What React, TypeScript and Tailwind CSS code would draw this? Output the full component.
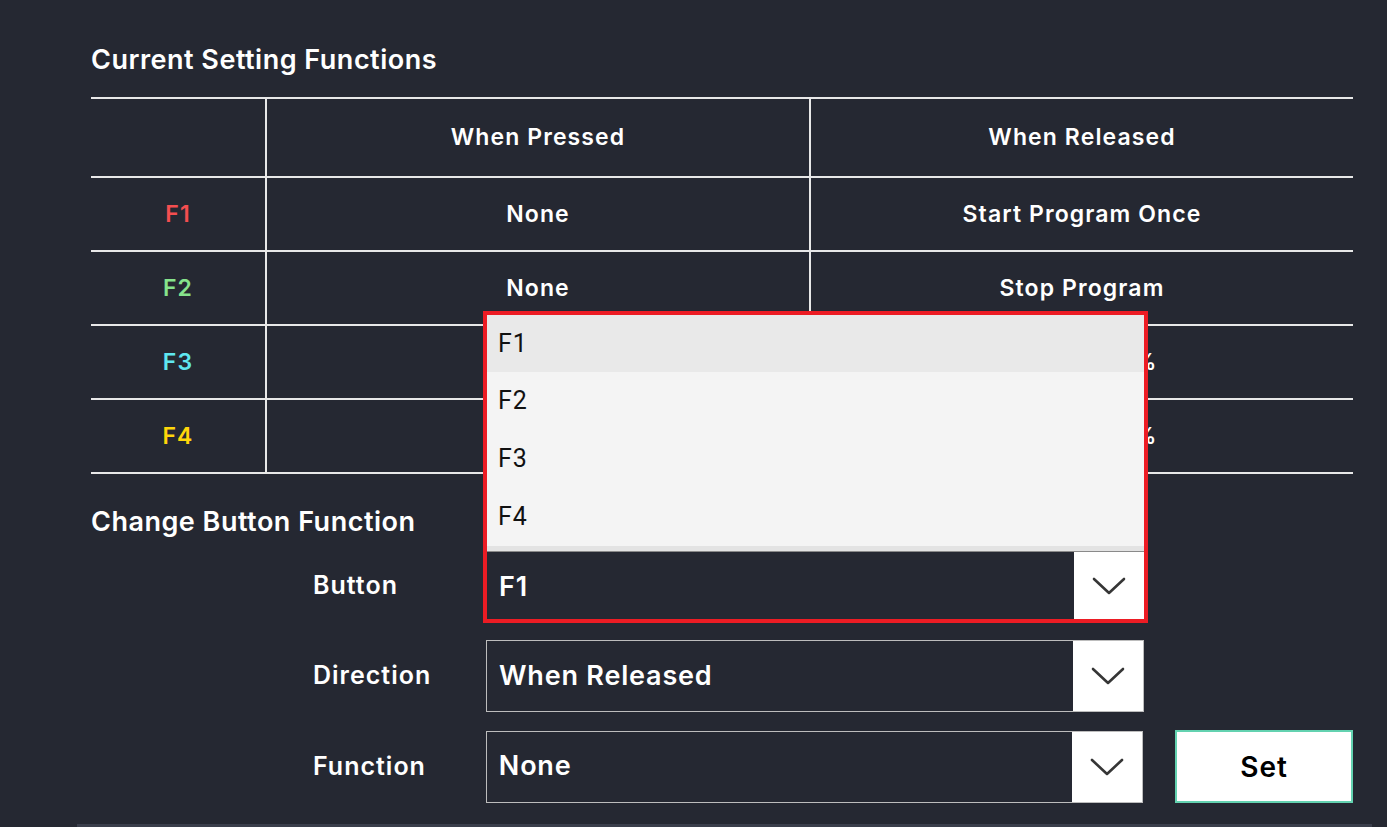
import React from "react";

type Row = {
  key: string;
  color: string;
  pressed: string;
  released: string;
};

const rows: Row[] = [
  { key: "F1", color: "text-[#f44e50]", pressed: "None", released: "Start Program Once" },
  { key: "F2", color: "text-[#86e38c]", pressed: "None", released: "Stop Program" },
  { key: "F3", color: "text-[#5fe7f0]", pressed: "None", released: "Speed +10%" },
  { key: "F4", color: "text-[#ffd60a]", pressed: "None", released: "Speed +10%" },
];

function Chevron() {
  return (
    <svg width="36" height="20" viewBox="0 0 36 20" fill="none">
      <polyline
        points="3,3 18,17 33,3"
        stroke="#363636"
        strokeWidth="2.6"
        strokeLinecap="round"
        strokeLinejoin="round"
      />
    </svg>
  );
}

// plain (closed) select box
function SelectBox({ value }: { value: string }) {
  return (
    <div className="flex h-[72px] w-[658px] border border-[#bdbdbd]">
      <div className="flex flex-1 items-center pl-[12px] text-[27px] font-semibold tracking-[0.8px]">
        {value}
      </div>
      <div className="flex w-[70px] items-center justify-center bg-white">
        <Chevron />
      </div>
    </div>
  );
}

// select with its option list opened upwards, outlined in red
function OpenSelect({ value, options }: { value: string; options: string[] }) {
  return (
    <div className="relative h-[72px] w-[658px]">
      <div className="absolute bottom-[-1px] left-[-3px] right-[-4px] z-10 flex flex-col border-4 border-[#ec1c24]">
        <div className="flex flex-col bg-[#f4f4f4] font-['Roboto'] text-[25px] font-normal text-[#111]">
          {options.map((o, i) => (
            <div
              key={o}
              className={
                i === 0
                  ? "flex h-[57px] items-center bg-[#e9e9e9] pl-[11px]"
                  : "flex h-[58px] items-center pl-[11px]"
              }
            >
              {o}
            </div>
          ))}
        </div>
        <div className="h-[5px] bg-[#e3e3e3]" />
        <div className="h-[1px] bg-[#8a8a8a]" />
        <div className="flex h-[67px] bg-[#252832]">
          <div className="flex flex-1 items-center pl-[12px] pt-[3px] text-[27px] font-semibold tracking-[0.8px] text-white">
            {value}
          </div>
          <div className="flex w-[70px] items-center justify-center bg-white">
            <Chevron />
          </div>
        </div>
      </div>
    </div>
  );
}

export default function App() {
  return (
    <div className="min-h-screen overflow-hidden bg-[#252832] font-['Inter',sans-serif] text-white">
      <div className="pl-[91px] pr-[34px] pt-[44px]">
        <h2 className="text-[27px] font-semibold leading-[32px] tracking-[0.5px]">
          Current Setting Functions
        </h2>

        {/* Table */}
        <div className="mt-[21px] border-b-2 border-[#e8e8e8] text-[23px] font-semibold tracking-[1.1px]">
          <div className="grid h-[79px] grid-cols-[174px_544px_544px] border-t-2 border-[#e8e8e8]">
            <div />
            <div className="flex items-center justify-center border-l-2 border-[#e8e8e8]">
              When Pressed
            </div>
            <div className="flex items-center justify-center border-l-2 border-[#e8e8e8]">
              When Released
            </div>
          </div>
          {rows.map((r) => (
            <div
              key={r.key}
              className="grid h-[74px] grid-cols-[174px_544px_544px] border-t-2 border-[#e8e8e8]"
            >
              <div className={`flex items-center justify-center ${r.color}`}>
                {r.key}
              </div>
              <div className="flex items-center justify-center border-l-2 border-[#e8e8e8]">
                {r.pressed}
              </div>
              <div className="flex items-center justify-center border-l-2 border-[#e8e8e8]">
                {r.released}
              </div>
            </div>
          ))}
        </div>

        <h2 className="mt-[32px] text-[27px] font-semibold leading-[32px] tracking-[0.5px]">
          Change Button Function
        </h2>

        {/* Form */}
        <div className="ml-[222px] mt-[12px] flex flex-col gap-[18px] text-[25px] font-semibold tracking-[1px]">
          <div className="flex items-center">
            <div className="w-[173px]">Button</div>
            <OpenSelect value="F1" options={["F1", "F2", "F3", "F4"]} />
          </div>
          <div className="flex items-center">
            <div className="w-[173px]">Direction</div>
            <SelectBox value="When Released" />
          </div>
          <div className="flex items-center">
            <div className="w-[173px]">Function</div>
            <SelectBox value="None" />
            <button className="ml-[32px] h-[73px] w-[178px] border-2 border-[#63d2b0] bg-white text-[28px] font-semibold tracking-[1px] text-black">
              Set
            </button>
          </div>
        </div>
      </div>
      <div className="ml-[77px] mr-[15px] mt-[21px] h-[3px] bg-[#3a3e4b]" />
    </div>
  );
}
